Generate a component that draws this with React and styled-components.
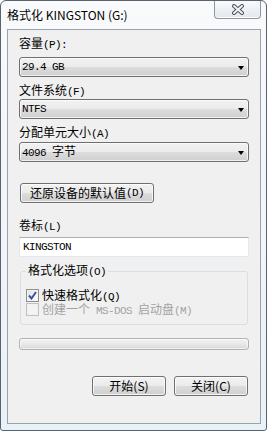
import { createGlobalStyle, styled } from "styled-components";

const Global = createGlobalStyle`
  html, body {
    margin: 0;
    padding: 0;
    background: #ffffff;
  }
  body {
    font-family: "Noto Sans CJK SC", "Liberation Sans", sans-serif;
    font-size: 12px;
  }
`;

const Window = styled.div`
  box-sizing: border-box;
  width: 267px;
  height: 431px;
  display: flex;
  flex-direction: column;
  border: 1px solid #59626e;
  border-radius: 6px 6px 3px 3px;
  background: linear-gradient(180deg, #f8fafc 0%, #f1f4f8 60%, #e9f2f7 100%);
  overflow: hidden;
`;

const TitleBar = styled.div`
  height: 28px;
  display: flex;
  justify-content: space-between;
  align-items: flex-start;
  padding: 0 5px 0 6px;
`;

const Title = styled.div`
  margin-top: 6px;
  font-size: 12px;
  line-height: 16px;
  color: #000;
  text-shadow: 0 0 6px #ffffff, 0 0 3px #ffffff;
`;

const CloseButton = styled.div`
  box-sizing: border-box;
  width: 47px;
  height: 19px;
  margin-top: -1px;
  display: flex;
  align-items: center;
  justify-content: center;
  border: 1px solid #8d96a2;
  border-top: none;
  border-radius: 0 0 4px 4px;
  background: linear-gradient(180deg, #fbfcfd 0%, #eef1f4 50%, #e4e8ec 100%);
  box-shadow: inset 0 -1px 0 #ffffff;
`;

const Client = styled.div`
  flex: 1;
  margin: 0 5px 6px 6px;
  padding: 0 11px;
  border: 1px solid #9aa3ad;
  background: #f0f0f0;
  display: flex;
  flex-direction: column;
`;

const Label = styled.div`
  margin-top: ${(p) => p.$top}px;
  height: 14px;
  line-height: 14px;
  color: #000;
  white-space: nowrap;
`;

const Mono = styled.span`
  font-family: "Liberation Mono", monospace;
  font-size: 11px;
  letter-spacing: -0.6px;
`;

const Select = styled.div`
  box-sizing: border-box;
  margin-top: ${(p) => p.$top}px;
  height: 20px;
  display: flex;
  align-items: center;
  justify-content: space-between;
  padding: 0 4px 0 2px;
  border: 1px solid #707070;
  border-radius: 3px;
  background: linear-gradient(180deg, #f2f2f2 0%, #ebebeb 50%, #dddddd 51%, #cfcfcf 100%);
  box-shadow: inset 0 0 0 1px rgba(255, 255, 255, 0.7);
  color: #000;
  line-height: 14px;
`;

const Arrow = styled.span`
  width: 0;
  height: 0;
  border-left: 3.5px solid transparent;
  border-right: 3.5px solid transparent;
  border-top: 4px solid #000;
  margin-top: 1px;
`;

const Button = styled.button`
  box-sizing: border-box;
  width: ${(p) => p.$w}px;
  height: 20px;
  padding: 0;
  display: flex;
  align-items: center;
  justify-content: center;
  border: 1px solid #707070;
  border-radius: 3px;
  background: linear-gradient(180deg, #f2f2f2 0%, #ebebeb 50%, #dddddd 51%, #cfcfcf 100%);
  box-shadow: inset 0 0 0 1px rgba(255, 255, 255, 0.75);
  font-family: inherit;
  font-size: 12px;
  line-height: 14px;
  color: #000;
`;

const ResetButton = styled(Button)`
  margin: 21px 0 0 1px;
`;

const Input = styled.div`
  box-sizing: border-box;
  margin-top: 5px;
  height: 20px;
  display: flex;
  align-items: center;
  padding: 0 3px;
  background: #ffffff;
  border: 1px solid #e3e9ef;
  border-top-color: #abadb3;
  line-height: 14px;
`;

const Group = styled.fieldset`
  margin: 6px 1px 0;
  padding: 0 5px 8px;
  border: 1px solid #d5dfe5;
  border-radius: 3px;
  min-width: 0;
`;

const Legend = styled.legend`
  padding: 0 2px;
  line-height: 14px;
  color: #000;
`;

const CheckRow = styled.div`
  margin-top: ${(p) => p.$top}px;
  height: 13px;
  display: flex;
  align-items: center;
  gap: 3px;
  line-height: 13px;
  color: ${(p) => (p.$disabled ? "#a3a3a3" : "#000")};
  white-space: nowrap;
`;

const Box = styled.span`
  box-sizing: border-box;
  flex: none;
  width: 13px;
  height: 13px;
  display: flex;
  align-items: center;
  justify-content: center;
  border: 1px solid ${(p) => (p.$disabled ? "#c2c2c2" : "#8e8f8f")};
  background: ${(p) =>
    p.$disabled
      ? "#f4f4f4"
      : "linear-gradient(135deg, #dcdcdc 0%, #f6f6f6 60%, #ffffff 100%)"};
  box-shadow: inset 0 0 0 1px ${(p) => (p.$disabled ? "#f0f0f0" : "#f4f4f4")};
`;

const Progress = styled.div`
  margin-top: 13px;
  height: 12px;
  box-sizing: border-box;
  border: 1px solid #b2b2b2;
  border-radius: 3px;
  background: linear-gradient(180deg, #f3f3f3 0%, #e8e8e8 50%, #d9d9d9 100%);
  box-shadow: inset 0 0 0 1px rgba(255, 255, 255, 0.6);
`;

const Actions = styled.div`
  margin: 26px 1px 0 0;
  display: flex;
  justify-content: flex-end;
  gap: 8px;
`;

const CloseIcon = () => (
  <svg width="14" height="11" viewBox="0 0 14 11">
    <path d="M3 2 L11 9 M11 2 L3 9" stroke="#4b5562" strokeWidth="4" strokeLinecap="round" />
    <path d="M3 2 L11 9 M11 2 L3 9" stroke="#f2f4f6" strokeWidth="2" strokeLinecap="round" />
  </svg>
);

const Check = () => (
  <svg width="9" height="9" viewBox="0 0 9 9">
    <path d="M1 4.5 L3.5 7.5 L8 1" fill="none" stroke="#3c54a4" strokeWidth="2" />
  </svg>
);

const App = () => {
  return (
    <>
      <Global />
      <Window>
        <TitleBar>
          <Title>格式化 KINGSTON (G:)</Title>
          <CloseButton>
            <CloseIcon />
          </CloseButton>
        </TitleBar>
        <Client>
          <Label $top={6}>
            容量<Mono>(P):</Mono>
          </Label>
          <Select $top={7}>
            <Mono>29.4 GB</Mono>
            <Arrow />
          </Select>

          <Label $top={6}>
            文件系统<Mono>(F)</Mono>
          </Label>
          <Select $top={2}>
            <Mono>NTFS</Mono>
            <Arrow />
          </Select>

          <Label $top={6}>
            分配单元大小<Mono>(A)</Mono>
          </Label>
          <Select $top={3}>
            <span>
              <Mono>4096 </Mono>字节
            </span>
            <Arrow />
          </Select>

          <ResetButton $w={134}>
            还原设备的默认值<Mono>(D)</Mono>
          </ResetButton>

          <Label $top={15}>
            卷标<Mono>(L)</Mono>
          </Label>
          <Input>
            <Mono>KINGSTON</Mono>
          </Input>

          <Group>
            <Legend>
              格式化选项<Mono>(O)</Mono>
            </Legend>
            <CheckRow $top={10}>
              <Box>
                <Check />
              </Box>
              <span>
                快速格式化<Mono>(Q)</Mono>
              </span>
            </CheckRow>
            <CheckRow $top={1} $disabled>
              <Box $disabled />
              <span>
                创建一个<Mono> MS-DOS </Mono>启动盘<Mono>(M)</Mono>
              </span>
            </CheckRow>
          </Group>

          <Progress />

          <Actions>
            <Button $w={74}>开始(S)</Button>
            <Button $w={74}>关闭(C)</Button>
          </Actions>
        </Client>
      </Window>
    </>
  );
};

export default App;
